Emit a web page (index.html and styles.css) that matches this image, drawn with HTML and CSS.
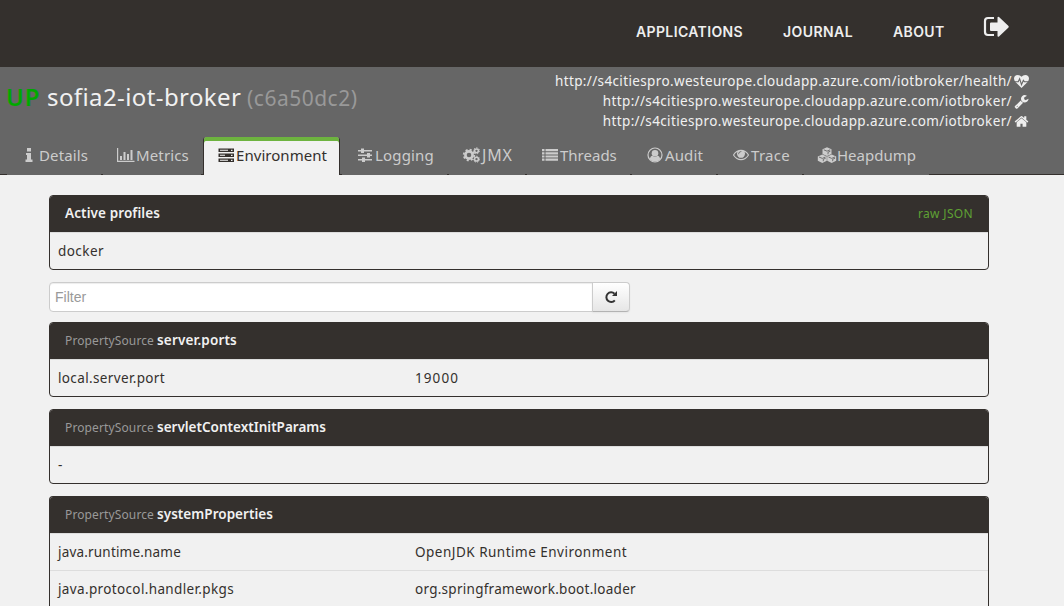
FILE: index.html
```html
<!DOCTYPE html>
<html lang="en">
<head>
<meta charset="utf-8">
<title>sofia2-iot-broker</title>
<link rel="stylesheet" href="styles.css">
</head>
<body>
<header class="topbar">
  <nav class="menu">
    <a class="menu-apps">APPLICATIONS</a>
    <a class="menu-journal">JOURNAL</a>
    <a class="menu-about">ABOUT</a>
    <svg class="signout" viewBox="0 0 26 22"><path d="M11 2H5Q2 2 2 5V16Q2 19 5 19H11" fill="none" stroke="#eee" stroke-width="2.2"/><path d="M8 6.500H14.500V1.200Q15 .5 16 1L25.500 10Q26 10.700 25.500 11.400L16 20.500Q15 21 14.500 20.200V15H8Q7 15 7 14V7.500Q7 6.500 8 6.500Z" fill="#eee"/></svg>
  </nav>
</header>
<section class="app">
  <div class="app-head">
    <h1 class="title"><b class="status">UP</b><span class="name">sofia2-iot-broker</span><span class="id">(c6a50dc2)</span></h1>
    <ul class="links">
      <li><span class="url">http://s4citiespro.westeurope.cloudapp.azure.com/iotbroker/health/</span><svg viewBox="0 0 16 16"><path d="M8 15L1.500 8.500Q0 6.500 0 4.800Q.2 1.300 4 1Q6.500 1 8 3Q9.500 1 12 1Q15.800 1.300 16 4.800Q16 6.500 14.500 8.500Z" fill="#eee"/><path d="M0 8.200H4.500L6 5L8 11.300L10 6.800L11 8.200H16" fill="none" stroke="#666" stroke-width="1.200"/></svg></li>
      <li><span class="url">http://s4citiespro.westeurope.cloudapp.azure.com/iotbroker/</span><svg viewBox="0 0 1792 1792"><path fill="#eee" d="M448 1472q0-26-19-45t-45-19-45 19-19 45 19 45 45 19 45-19 19-45zm644-420l-682 682q-37 37-90 37-52 0-91-37l-106-108q-38-36-38-90 0-53 38-91l681-681q39 98 114.500 173.500t173.500 114.500zm634-435q0 39-23 106-47 134-164.500 217.500t-258.500 83.500q-185 0-316.500-131.500t-131.500-316.500 131.500-316.500 316.500-131.500q58 0 121.500 16.500t107.500 46.500q16 11 16 28t-16 28l-293 169v224l193 107q5-3 79-48.500t135.500-81 70.500-35.500q15 0 23.500 10t8.500 25z"/></svg></li>
      <li><span class="url">http://s4citiespro.westeurope.cloudapp.azure.com/iotbroker/</span><svg viewBox="0 0 1792 1792"><path fill="#eee" d="M1472 992v480q0 26-19 45t-45 19h-384v-384h-256v384h-384q-26 0-45-19t-19-45v-480l576-477 575 474q1 2 1 6zm223-69l-62 74q-8 9-21 11h-3q-13 0-21-7l-692-577-692 577q-12 8-24 7-13-2-21-11l-62-74q-8-10-7-23.500t11-21.500l719-599q32-26 76-26t76 26l244 204v-195q0-14 9-23t23-9h192q14 0 23 9t9 23v408l219 182q10 8 11 21.500t-7 23.500z"/></svg></li>
    </ul>
  </div>
  <ul class="tabs">
    <li class="t-details"><svg viewBox="0 0 20 16"><path d="M8 1h4v3.500H8zM7 6h5v6.500h1.500V15H6.500v-2.500H8V8H7z"/></svg><span>Details</span></li>
    <li class="t-metrics"><svg viewBox="0 0 20 16"><path d="M1 1h1.200v12.800H18.500V15H1zM4 9h2v4H4zM7.500 5h2v8h-2zM11 7h2v6h-2zM14.500 3h2v10h-2z"/></svg><span>Metrics</span></li>
    <li class="t-env active"><svg viewBox="0 0 20 16"><path d="M2.500 1.500h15.500v3.500H2.500zM2.500 6.500h15.500v3.500H2.500zM2.500 11.500h15.500v3.500H2.500z"/><path class="cut" d="M4 2.700h8v1.100H4zM4 7.700h5v1.100H4zM4 12.700h8v1.100H4zM15 2.700h1.500v1.200H15zM15 7.700h1.500v1.200H15zM15 12.700h1.500v1.200H15z"/></svg><span>Environment</span></li>
    <li class="t-logging"><svg viewBox="0 0 20 16"><path d="M3 3h14v1.500H3zM3 7.500h14V9H3zM3 12h14v1.500H3zM6 1.500h3V6H6zM12 6h3v4.500h-3zM7 10.500h3V15H7z"/></svg><span>Logging</span></li>
    <li class="t-jmx"><svg viewBox="0 0 20 16"><g fill="none"><circle cx="7" cy="8" r="3.600" class="ln" stroke-width="2.600"/><circle cx="7" cy="8" r="5.300" class="ln" stroke-width="1.800" stroke-dasharray="2.080 2.080"/><circle cx="14.500" cy="3.800" r="1.900" class="ln" stroke-width="1.500"/><circle cx="14.500" cy="3.800" r="3" class="ln" stroke-width="1" stroke-dasharray="1.350 1.350"/><circle cx="14.500" cy="12.200" r="1.900" class="ln" stroke-width="1.500"/><circle cx="14.500" cy="12.200" r="3" class="ln" stroke-width="1" stroke-dasharray="1.350 1.350"/></g></svg><span>JMX</span></li>
    <li class="t-threads"><svg viewBox="0 0 20 16"><path d="M2 2h2.500v2.200H2zM2 5.200h2.500v2.200H2zM2 8.400h2.500v2.200H2zM2 11.600h2.500v2.200H2zM5.500 2H18v2.200H5.500zM5.500 5.200H18v2.200H5.500zM5.500 8.400H18v2.200H5.500zM5.500 11.600H18v2.200H5.500z"/></svg><span>Threads</span></li>
    <li class="t-audit"><svg viewBox="0 0 20 16"><circle cx="10" cy="8" r="7" fill="none" class="ln" stroke-width="1.200"/><circle cx="10" cy="6.300" r="3.300"/><path d="M4.800 12.500Q5.200 9 7.500 8.800Q10 10.500 12.500 8.800Q14.800 9 15.200 12.500Q10 16.500 4.800 12.500Z"/></svg><span>Audit</span></li>
    <li class="t-trace"><svg viewBox="-224 64 2240 1792"><path d="M1664 960q-152-236-381-353 61 104 61 225 0 185-131.500 316.500t-316.500 131.500-316.500-131.500-131.500-316.500q0-121 61-225-229 117-381 353 133 205 333.500 326.500t434.500 121.500 434.500-121.500 333.500-326.500zm-720-384q0-20-14-34t-34-14q-125 0-214.500 89.500t-89.500 214.500q0 20 14 34t34 14 34-14 14-34q0-86 61-147t147-61q20 0 34-14t14-34zm848 384q0 34-20 69-140 230-376.500 368.500t-499.500 138.500-499.500-139-376.500-368q-20-35-20-69t20-69q140-229 376.500-368t499.500-139 499.500 139 376.500 368q20 35 20 69z"/></svg><span>Trace</span></li>
    <li class="t-heap"><svg viewBox="0 0 20 16"><path d="M10 .3L14.500 2.200V7L10 9L5.500 7V2.200ZM5.300 7.500L9.800 9.400V13.800L5.300 15.900L.8 13.800V9.400ZM14.700 7.500L19.200 9.400V13.800L14.700 15.900L10.200 13.800V9.400Z"/><path class="cutline" d="M6.800 2.800L10 4.200L13.200 2.800M11 7.300V5.200L13.400 4.200M2 10L5.300 11.400L8.500 10M6.300 14.200V12.200L8.700 11.200M11.500 10L14.700 11.400L18 10M15.700 14.200V12.200L18.100 11.200"/></svg><span>Heapdump</span></li>
  </ul>
</section>
<main class="content">
  <section class="card">
    <h2><span class="h-active">Active profiles</span><a class="raw">raw JSON</a></h2>
    <div class="row"><span class="k-docker">docker</span></div>
  </section>
  <div class="filter"><div class="input">Filter</div><div class="btn"><svg viewBox="0 0 14 14"><path d="M10.800 10.300A4.800 4.800 0 1 1 10.500 3.700" fill="none" stroke="#333" stroke-width="2"/><path d="M13 1V6H8Z" fill="#333"/></svg></div></div>
  <section class="card">
    <h2><small>PropertySource</small><span class="h-ports">server.ports</span></h2>
    <div class="row"><span class="k-port">local.server.port</span><span class="v-port">19000</span></div>
  </section>
  <section class="card">
    <h2><small>PropertySource</small><span class="h-servlet">servletContextInitParams</span></h2>
    <div class="row"><span>-</span></div>
  </section>
  <section class="card last">
    <h2><small>PropertySource</small><span class="h-system">systemProperties</span></h2>
    <div class="row"><span class="k-name">java.runtime.name</span><span class="v-name">OpenJDK Runtime Environment</span></div>
    <div class="row"><span class="k-pkgs">java.protocol.handler.pkgs</span><span class="v-pkgs">org.springframework.boot.loader</span></div>
  </section>
</main>
</body>
</html>
```
FILE: styles.css
```css
* { box-sizing: border-box; }
body { margin: 0; background: #f1f1f1; color: #34302d; font: 13.500px/20px "Noto Sans", sans-serif; }
ul { list-style: none; margin: 0; padding: 0; }
.topbar { height: 67px; background: #34302d; }
.menu { display: flex; height: 64px; padding-left: 636px; align-items: center; color: #eee; font: 600 14px/20px Inter, sans-serif; }
.menu a { white-space: nowrap; flex: none; }
.menu-apps { width: 147px; letter-spacing: .37px; }
.menu-journal { width: 110px; letter-spacing: .42px; }
.menu-about { width: 90px; letter-spacing: .4px; }
.signout { width: 26px; height: 22px; margin-bottom: 11px; }
.app { height: 108px; background: #666; display: flex; flex-direction: column; }
.app-head { height: 70px; display: flex; justify-content: space-between; padding: 4px 35px 0 6px; }
.title { display: flex; align-items: baseline; margin: 6px 0 0; font-size: 24px; line-height: 40px; font-weight: 400; color: #f1f1f1; white-space: nowrap; }
.status { width: 41px; color: #00a800; letter-spacing: .8px; font-weight: 600; }
.name { width: 200px; letter-spacing: .4px; }
.id { color: #999; font-size: 21px; letter-spacing: .5px; }
.links li { display: flex; justify-content: flex-end; align-items: center; height: 20px; color: #f1f1f1; white-space: nowrap; }
.url { letter-spacing: .36px; }
.links svg { width: 15px; height: 15px; margin-left: 2px; }
.tabs { display: flex; height: 38px; padding-left: 7px; gap: 2px; color: #ccc; font-size: 15px; background: linear-gradient(#34302d, #34302d) bottom / 100% 1px no-repeat; }
.tabs li { display: flex; align-items: center; padding: 0 0 2px 13px; background: #666; white-space: nowrap; }
.tabs svg { width: 20px; height: 16px; fill: #ccc; flex: none; }
.ln { stroke: #ccc; }
.cut { fill: #f1f1f1; }
.cutline { fill: none; stroke: #666; stroke-width: .9; }
.t-details { width: 94px; letter-spacing: .11px; }
.t-metrics { width: 98px; letter-spacing: .14px; }
.t-env { width: 137px; letter-spacing: .05px; }
.t-logging { width: 105px; letter-spacing: .17px; }
.t-jmx { width: 76px; letter-spacing: .8px; }
.t-jmx span { font-size: 16px; }
.t-threads { width: 103px; }
.t-audit { width: 84px; letter-spacing: .12px; }
.t-trace { width: 84px; letter-spacing: .3px; }
.t-heap { width: 125px; }
.tabs li.t-details { padding-left: 12px; }
.tabs .active { background: #f1f1f1; color: #34302d; border: 1px solid #34302d; border-width: 0 1px; padding-left: 12px; box-shadow: inset 0 4px #6db33f; border-radius: 3px 3px 0 0; }
.active svg { fill: #34302d; }
.content { padding: 20px 75px 0 49px; }
.card { border: 1px solid #34302d; border-radius: 4px; overflow: hidden; margin-bottom: 12px; }
.card h2 { display: flex; align-items: center; margin: 0; height: 36px; padding: 0 15px 2px 15px; background: #34302d; color: #f1f1f1; font-size: 13.500px; font-weight: 600; white-space: nowrap; }
.card small { width: 92px; font-size: 12px; font-weight: 400; color: #999; letter-spacing: .12px; padding-top: 2px; }
.raw { margin-left: auto; font-size: 12px; font-weight: 400; color: #5fa134; letter-spacing: .33px; padding-top: 2px; }
.row { display: grid; grid-template-columns: 357px 1fr; justify-items: start; height: 37px; padding: 0 0 1px 8px; align-items: center; border-top: 1px solid #ddd; white-space: nowrap; }
.last { margin-bottom: 0; border-bottom: 0; border-radius: 4px 4px 0 0; }
.last .row:last-child { height: 36px; padding-bottom: 0; }
.h-active { letter-spacing: .1px; }
.h-ports { letter-spacing: .17px; }
.h-system { letter-spacing: .04px; }
.k-docker { letter-spacing: .43px; }
.k-port, .k-pkgs { letter-spacing: .36px; }
.v-port { letter-spacing: 1.080px; }
.k-name { letter-spacing: .19px; }
.v-name { letter-spacing: .49px; }
.v-pkgs { letter-spacing: .27px; }
.filter { display: flex; height: 30px; margin-bottom: 10px; }
.input { width: 544px; border: 1px solid #ccc; border-radius: 4px 0 0 4px; background: #fff; box-shadow: inset 0 1px 1px rgba(0,0,0,.075); padding: 4px 5px; color: #999; font: 14px/20px "Liberation Sans", sans-serif; }
.btn { width: 38px; margin-left: -1px; border: 1px solid #ccc; border-bottom-color: #b3b3b3; border-radius: 0 4px 4px 0; background: linear-gradient(#fff, #e6e6e6); display: grid; place-items: center; box-shadow: 0 1px 2px rgba(0,0,0,.05); }
.btn svg { width: 14px; height: 14px; }
```
